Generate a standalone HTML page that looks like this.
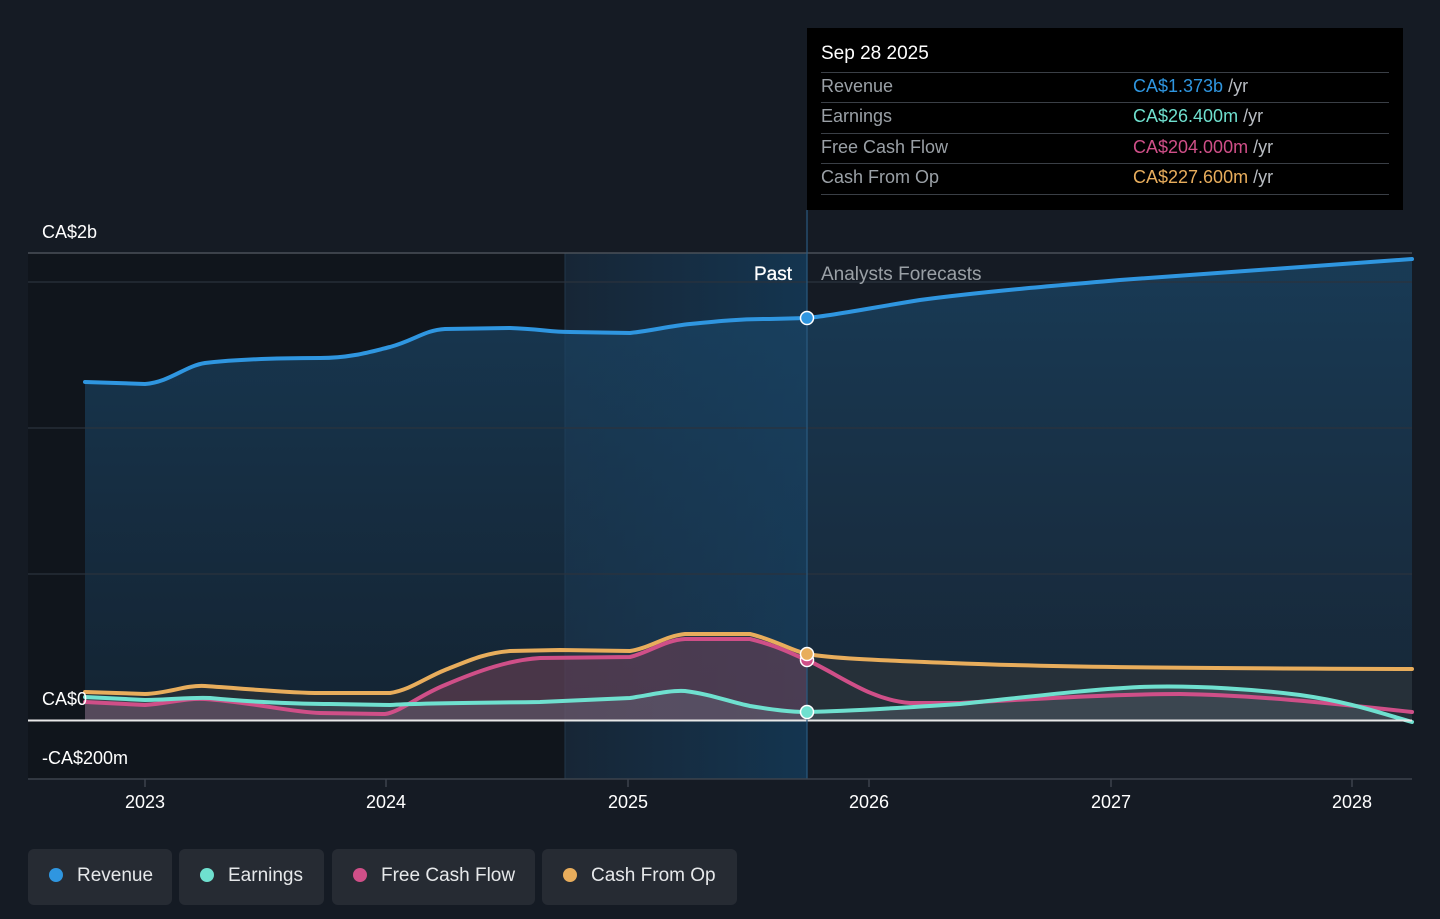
<!DOCTYPE html>
<html><head><meta charset="utf-8"><style>
html,body{margin:0;padding:0;background:#151b24;}
body{width:1440px;height:919px;overflow:hidden;position:relative;font-family:"Liberation Sans",sans-serif;}
svg{position:absolute;left:0;top:0}
.tt{position:absolute;left:807px;top:28px;width:596px;height:182px;background:#000;}
.tt .h{position:absolute;left:14px;top:15px;color:#fff;font-size:19px;}
.row{position:absolute;left:14px;width:568px;height:30px;border-top:1px solid #3a3f46;font-size:18px;color:#9aa0a6;line-height:27px}
.row span{position:absolute;left:312px}
.row i{font-style:normal;color:#b8bcc2}
.leg{position:absolute;top:849px;height:56px;background:#262b33;border-radius:6px;color:#e6e8ea;font-size:19px;line-height:53px;}
.leg b{position:absolute;left:21px;top:19px;width:14px;height:14px;border-radius:50%}
.leg span{position:absolute;left:49px;}
</style></head><body>
<svg width="1440" height="919" viewBox="0 0 1440 919">
<defs>
<linearGradient id="hl" x1="0" x2="1"><stop offset="0" stop-color="#172636"/><stop offset="1" stop-color="#143550"/></linearGradient>
<linearGradient id="rf" x1="0" y1="0" x2="0" y2="1"><stop offset="0" stop-color="#1a4566" stop-opacity="0.75"/><stop offset="1" stop-color="#1a3a55" stop-opacity="0.4"/></linearGradient>
</defs>
<rect x="28" y="253" width="537" height="526" fill="#10151c"/>
<rect x="565" y="253" width="242" height="526" fill="url(#hl)"/>
<line x1="565" y1="253" x2="565" y2="779" stroke="#22364a"/>
<path d="M85,382 L145,384 C170,382 185,366 205,363 C240,359 290,358 320,358 C350,358 370,352 390,347 C415,340 425,330 445,329 L510,328 C540,329 550,332 570,332 L630,333 C650,331 670,326 690,324 C720,321 740,319 770,319 L807,318 C830,316 870,308 920,300 C980,292 1050,286 1120,280 L1412,259 L1412,720 L85,720 Z" fill="url(#rf)"/>
<g stroke="#2b333d" stroke-width="1.3"><line x1="28" y1="282" x2="1412" y2="282"/><line x1="28" y1="428" x2="1412" y2="428"/><line x1="28" y1="574" x2="1412" y2="574"/></g>
<line x1="28" y1="253" x2="1412" y2="253" stroke="#4a5058" stroke-width="1.5"/>
<path d="M85,692 L145,694 C170,693 185,685 205,686 C250,689 290,693 320,693 L390,693 C410,690 425,678 445,670 C470,660 485,653 510,651 L560,650 L630,651 C650,648 665,636 685,634 L750,634 C775,640 790,650 807,654 C830,658 870,660 950,663 C1050,667 1150,668 1412,669 L1412,720 L85,720Z" fill="#3a3a3a" fill-opacity="0.45"/>
<path d="M85,702 L145,705 C170,703 185,698 205,699 C250,702 290,712 320,713 L385,714 C400,712 420,695 445,685 C480,670 510,660 540,658 L630,657 C650,652 665,640 685,639 L750,639 C775,645 790,653 807,660 L807,720 L85,720Z" fill="#a04a70" fill-opacity="0.3"/>
<path d="M85,697 L145,700 C170,700 190,697 210,698 C250,702 300,704 330,704 L390,705 C420,703 470,703 540,702 L630,698 C650,695 670,690 685,691 C710,694 730,702 750,706 C775,710 790,712 807,712 C850,711 900,708 960,704 C1020,698 1080,690 1140,687 C1200,685 1260,690 1300,695 C1350,702 1380,713 1412,722 L1412,720 L85,720Z" fill="#7a8896" fill-opacity="0.25"/>
<g fill="none" stroke-width="4" stroke-linecap="round">
<path d="M85,382 L145,384 C170,382 185,366 205,363 C240,359 290,358 320,358 C350,358 370,352 390,347 C415,340 425,330 445,329 L510,328 C540,329 550,332 570,332 L630,333 C650,331 670,326 690,324 C720,321 740,319 770,319 L807,318 C830,316 870,308 920,300 C980,292 1050,286 1120,280 L1412,259" stroke="#2f96e0"/>
<path d="M85,692 L145,694 C170,693 185,685 205,686 C250,689 290,693 320,693 L390,693 C410,690 425,678 445,670 C470,660 485,653 510,651 L560,650 L630,651 C650,648 665,636 685,634 L750,634 C775,640 790,650 807,654 C830,658 870,660 950,663 C1050,667 1150,668 1412,669" stroke="#e8ad5c"/>
<path d="M85,702 L145,705 C170,703 185,698 205,699 C250,702 290,712 320,713 L385,714 C400,712 420,695 445,685 C480,670 510,660 540,658 L630,657 C650,652 665,640 685,639 L750,639 C775,645 790,653 807,660 C840,675 870,700 910,703 L960,703 C1050,698 1120,694 1180,694 C1250,695 1330,703 1412,712" stroke="#cf4f88"/>
<path d="M85,697 L145,700 C170,700 190,697 210,698 C250,702 300,704 330,704 L390,705 C420,703 470,703 540,702 L630,698 C650,695 670,690 685,691 C710,694 730,702 750,706 C775,710 790,712 807,712 C850,711 900,708 960,704 C1020,698 1080,690 1140,687 C1200,685 1260,690 1300,695 C1350,702 1380,713 1412,722" stroke="#6fe0cf"/>
</g>
<line x1="28" y1="720.5" x2="1412" y2="720.5" stroke="#e8e8e8" stroke-width="2"/>
<line x1="807" y1="210" x2="807" y2="779" stroke="#2a5a80" stroke-width="1.2"/>
<line x1="28" y1="779" x2="1412" y2="779" stroke="#3c434c" stroke-width="1.5"/>
<g stroke="#3c434c" stroke-width="1.5"><line x1="145" y1="779" x2="145" y2="787"/><line x1="386" y1="779" x2="386" y2="787"/><line x1="628" y1="779" x2="628" y2="787"/><line x1="869" y1="779" x2="869" y2="787"/><line x1="1111" y1="779" x2="1111" y2="787"/><line x1="1352" y1="779" x2="1352" y2="787"/></g>
<g stroke="#fff" stroke-width="1.5">
<circle cx="807" cy="318" r="6.5" fill="#2f96e0"/>
<circle cx="807" cy="660" r="6.5" fill="#cf4f88"/>
<circle cx="807" cy="654" r="6.5" fill="#e8ad5c"/>
<circle cx="807" cy="712" r="6.5" fill="#6fe0cf"/>
</g>
<g font-family="Liberation Sans" font-size="18" fill="#fff">
<text x="42" y="238">CA$2b</text>
<text x="42" y="705">CA$0</text>
<text x="42" y="764">-CA$200m</text>
<text x="792" y="280" text-anchor="end" font-size="19" stroke="#fff" stroke-width="0.3">Past</text>
<text x="821" y="280" fill="#9aa0a6" font-size="19">Analysts Forecasts</text>
<g text-anchor="middle"><text x="145" y="808">2023</text><text x="386" y="808">2024</text><text x="628" y="808">2025</text><text x="869" y="808">2026</text><text x="1111" y="808">2027</text><text x="1352" y="808">2028</text></g>
</g>
</svg>
<div class="tt">
<div class="h">Sep 28 2025</div>
<div class="row" style="top:44px">Revenue<span><i style="color:#2f96e0">CA$1.373b</i> <i>/yr</i></span></div>
<div class="row" style="top:74px">Earnings<span><i style="color:#6fe0cf">CA$26.400m</i> <i>/yr</i></span></div>
<div class="row" style="top:105px">Free Cash Flow<span><i style="color:#cf4f88">CA$204.000m</i> <i>/yr</i></span></div>
<div class="row" style="top:135px">Cash From Op<span><i style="color:#e8ad5c">CA$227.600m</i> <i>/yr</i></span></div>
<div class="row" style="top:166px;height:0"></div>
</div>
<div class="leg" style="left:28px;width:144px"><b style="background:#2f96e0"></b><span>Revenue</span></div>
<div class="leg" style="left:179px;width:145px"><b style="background:#6fe0cf"></b><span>Earnings</span></div>
<div class="leg" style="left:332px;width:203px"><b style="background:#cf4f88"></b><span>Free Cash Flow</span></div>
<div class="leg" style="left:542px;width:195px"><b style="background:#e8ad5c"></b><span>Cash From Op</span></div>
</body></html>
